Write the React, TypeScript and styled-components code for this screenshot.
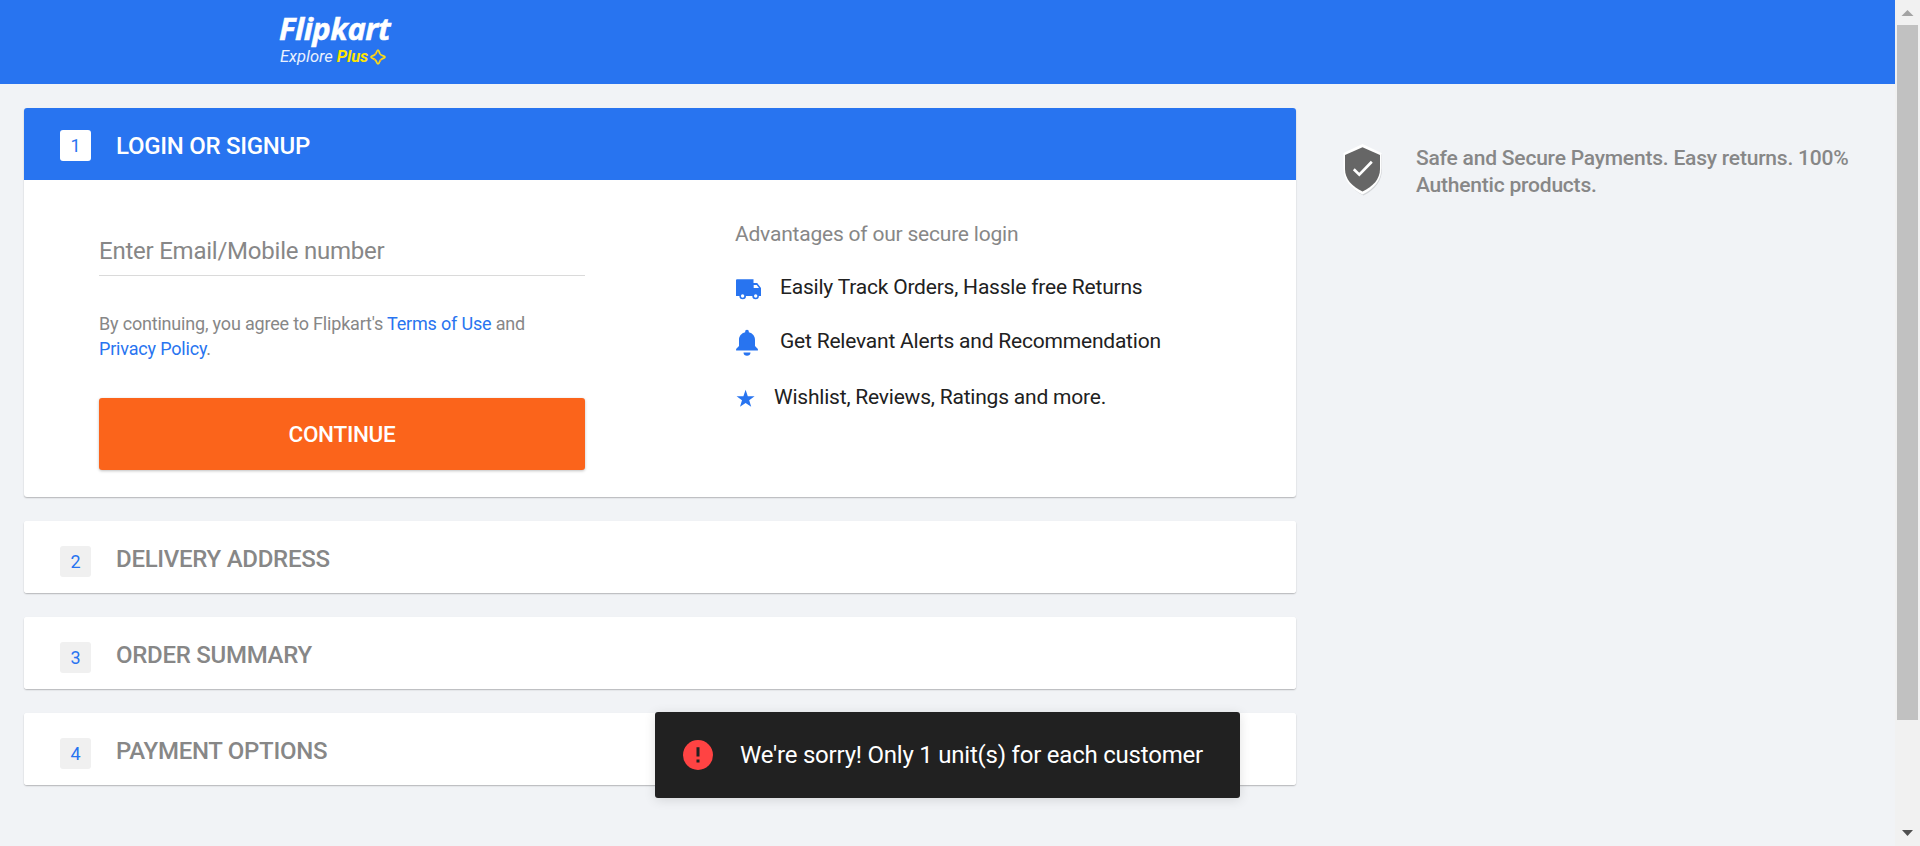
import React from "react";
import styled, { createGlobalStyle } from "styled-components";

const BLUE = "#2874f0";
const GREY = "#878787";

const GlobalStyle = createGlobalStyle`
  * { box-sizing: border-box; }
  html, body { margin: 0; height: 100%; overflow: hidden; }
  body { background: #f1f3f6; font-family: Roboto, "Liberation Sans", sans-serif; color: #212121; }
  h3, p, ul { margin: 0; padding: 0; font-weight: 400; }
`;

const Screen = styled.div`
  display: flex;
  width: 1920px;
  height: 846px;
  overflow: hidden;
`;

const Page = styled.div`
  position: relative;
  flex: 1;
  min-width: 0;
`;

const Header = styled.header`
  height: 84px;
  background: ${BLUE};
  padding: 10px 0 0 279px;
`;

const Logo = styled.div`
  height: 36px;
  font: italic 700 31px/36px "Open Sans", sans-serif;
  letter-spacing: -0.5px;
  -webkit-text-stroke: 0.5px #fff;
  color: #fff;
  white-space: nowrap;
`;

const Tagline = styled.div`
  display: flex;
  align-items: center;
  height: 21px;
  padding-left: 1px;
  font-size: 16.5px;
  line-height: 21px;
  font-style: italic;
  color: #e9f1fe;
  white-space: nowrap;
`;

const Plus = styled.b`
  margin: 0 2px 0 4px;
  font-weight: 700;
  letter-spacing: -0.1px;
  color: #ffe500;
`;

const Main = styled.main`
  display: flex;
  padding: 24px 24px 0;
`;

const Steps = styled.div`
  display: flex;
  flex-direction: column;
  gap: 24px;
  width: 1272px;
`;

const Card = styled.section`
  background: #fff;
  border-radius: 3px;
  box-shadow: 0 1px 1.5px 0 rgba(0, 0, 0, 0.26);
`;

const StepHeader = styled.div<{ $active?: boolean }>`
  display: flex;
  align-items: flex-start;
  height: 72px;
  padding: ${(p) => (p.$active ? "22px" : "25px")} 36px 0;
  border-radius: ${(p) => (p.$active ? "3px 3px 0 0" : "3px")};
  background: ${(p) => (p.$active ? BLUE : "#fff")};
`;

const StepNumber = styled.span<{ $active?: boolean }>`
  width: 31px;
  height: 31px;
  margin-right: 25px;
  border-radius: 3px;
  background: ${(p) => (p.$active ? "#fff" : "#f0f0f0")};
  color: ${BLUE};
  font-size: 18px;
  line-height: 31px;
  text-align: center;
`;

const StepTitle = styled.h3<{ $active?: boolean }>`
  margin-top: ${(p) => (p.$active ? "2px" : "-1px")};
  font-size: 24px;
  line-height: 28px;
  font-weight: 500;
  letter-spacing: -0.28px;
  color: ${(p) => (p.$active ? "#fff" : GREY)};
`;

const LoginBody = styled.div`
  display: flex;
  height: 317px;
  padding: 36px 75px 0;
`;

const Form = styled.div`
  width: 486px;
  margin-right: 150px;
`;

const Field = styled.div`
  height: 60px;
  padding-top: 21px;
  border-bottom: 1px solid #dadada;
  font-size: 24px;
  line-height: 28px;
  letter-spacing: -0.23px;
  color: ${GREY};
`;

const Terms = styled.p`
  margin-top: 35px;
  width: 450px;
  font-size: 18px;
  line-height: 25px;
  letter-spacing: -0.185px;
  color: ${GREY};
`;

const Link = styled.span`
  color: ${BLUE};
`;

const Continue = styled.button`
  display: block;
  width: 100%;
  height: 72px;
  margin-top: 37px;
  border: 0;
  border-radius: 3px;
  background: #fb641b;
  box-shadow: 0 1px 3px 0 rgba(0, 0, 0, 0.25);
  color: #fff;
  font: 500 22.5px Roboto, sans-serif;
  letter-spacing: -0.3px;
`;

const Advantages = styled.div`
  padding-top: 5px;
  letter-spacing: -0.21px;
`;

const AdvantagesTitle = styled.p`
  font-size: 21px;
  line-height: 26px;
  color: ${GREY};
`;

const Advantage = styled.div<{ $gap: number; $top: number }>`
  display: flex;
  align-items: flex-start;
  gap: ${(p) => p.$gap}px;
  margin-top: ${(p) => p.$top}px;
  height: 28px;
  font-size: 21px;
  line-height: 28px;
  white-space: nowrap;
`;

const Aside = styled.aside`
  display: flex;
  align-items: flex-start;
  padding: 34px 0 0 45px;
`;

const AsideText = styled.p`
  width: 446px;
  margin: 3px 0 0 30px;
  font-size: 21px;
  line-height: 27px;
  font-weight: 500;
  letter-spacing: -0.21px;
  color: ${GREY};
`;

const Toast = styled.div`
  position: absolute;
  left: 655px;
  top: 712px;
  display: flex;
  align-items: center;
  gap: 27px;
  width: 585px;
  height: 86px;
  padding-left: 28px;
  border-radius: 3px;
  background: #212121;
  box-shadow: 0 2px 12px 0 rgba(0, 0, 0, 0.12);
  color: #fff;
  font-size: 24px;
  line-height: 28px;
  letter-spacing: -0.22px;
  white-space: nowrap;
`;

const Scrollbar = styled.div`
  display: flex;
  flex-direction: column;
  align-items: center;
  width: 25px;
  background: #f1f1f1;
`;

const Thumb = styled.div`
  width: 21px;
  height: 695px;
  background: #c1c1c1;
`;

const ArrowBox = styled.svg`
  display: block;
  width: 25px;
  height: 25px;
`;

const Spacer = styled.div`
  flex: 1;
`;

const PlusStar = () => (
  <svg width="16" height="16" viewBox="0 0 16 16">
    <path
      d="M8 1.2C8.9 1.2 9.2 3 9.8 4.5C10.3 5.6 11.2 6.2 12.5 6.6C14 7.1 15 7.4 15 8.1C15 8.9 13.6 9.2 12.2 9.8C10.9 10.4 10.2 11.1 9.8 12.3C9.3 13.8 8.9 14.9 8 14.9C7.1 14.9 6.8 13.6 6.2 12.2C5.7 11 5 10.3 3.8 9.8C2.2 9.2 1 8.9 1 8C1 7.2 2.4 6.9 3.8 6.3C5 5.8 5.7 5.2 6.2 4C6.8 2.5 7.1 1.2 8 1.2Z"
      fill="none"
      stroke="#fddc16"
      strokeWidth="1.8"
    />
    <path d="M4.8 5.6L6.2 4.1M9.8 12.3L11 10.5M3.8 9.8L5.5 11" stroke="#f9a825" strokeWidth="1.4" />
  </svg>
);

const Truck = () => (
  <svg width="27" height="28" viewBox="0 0 27 28">
    <path
      fill={BLUE}
      d="M2 6.3H18.5V10H22.2L26 15V23H23.9A3.3 3.3 0 0 1 17.3 23H11A3.3 3.3 0 0 1 4.4 23H1V7.3Q1 6.3 2 6.3Z"
    />
    <path fill="#fff" d="M18.7 12H21.7L24 15H18.7Z" />
    <circle cx="7.6" cy="23" r="1.7" fill="#fff" />
    <circle cx="20.7" cy="23" r="1.7" fill="#fff" />
  </svg>
);

const Bell = () => (
  <svg width="24" height="30" viewBox="0 0 24 30">
    <path
      fill={BLUE}
      d="M12 2.8C13.2 2.8 13.8 3.6 13.8 4.6V5.3C17.8 6.3 20 9.3 20 13V19L22.9 21.9V23.4H1.1V21.9L4 19V13C4 9.3 6.2 6.3 10.2 5.3V4.6C10.2 3.6 10.8 2.8 12 2.8ZM8.5 25.4H15.5C15.5 27.6 14 28.7 12 28.7S8.5 27.6 8.5 25.4Z"
    />
  </svg>
);

const Star = () => (
  <svg width="20" height="28" viewBox="0 0 20 28">
    <path
      fill={BLUE}
      d="M10.6 6.8L12.8 13.3H19.6L14.2 17.3L16.2 23.8L10.6 19.9L5 23.8L7 17.3L1.6 13.3H8.4Z"
    />
  </svg>
);

const Shield = () => (
  <svg width="45" height="56" viewBox="0 0 45 56">
    <path
      d="M22 3.5L41 12.5V27C41 39 34 47.5 22.5 53.5C11 48 4 39 4 27V12.5Z"
      fill="#d3d5d8"
    />
    <path d="M21.5 2L40.5 11V26C40.5 38 33 47 21.5 52.5C10 47 2.5 38 2.5 26V11Z" fill="#fff" />
    <path d="M21.5 5.2L39 13V27C39 37 32 44.5 21.5 49.5C11 44.5 4 37 4 27V13Z" fill="#666" />
    <path d="M12.8 27.3L18.3 32.7L30.8 19.7" fill="none" stroke="#fff" strokeWidth="2.7" />
  </svg>
);

const ErrorIcon = () => (
  <svg width="30" height="30" viewBox="0 0 30 30">
    <circle cx="15" cy="15" r="15" fill="#ff4343" />
    <path d="M13.5 7.2H16.5V16.5H13.5ZM13.5 19.5H16.5V22.5H13.5Z" fill="#212121" />
  </svg>
);

const steps = [
  { n: 2, title: "DELIVERY ADDRESS" },
  { n: 3, title: "ORDER SUMMARY" },
  { n: 4, title: "PAYMENT OPTIONS" },
];

export default function App() {
  return (
    <Screen>
      <GlobalStyle />
      <Page>
        <Header>
          <Logo>Flipkart</Logo>
          <Tagline>
            Explore<Plus>Plus</Plus>
            <PlusStar />
          </Tagline>
        </Header>
        <Main>
          <Steps>
            <Card>
              <StepHeader $active>
                <StepNumber $active>1</StepNumber>
                <StepTitle $active>LOGIN OR SIGNUP</StepTitle>
              </StepHeader>
              <LoginBody>
                <Form>
                  <Field>Enter Email/Mobile number</Field>
                  <Terms>
                    By continuing, you agree to Flipkart's <Link>Terms of Use</Link> and{" "}
                    <Link>Privacy Policy</Link>.
                  </Terms>
                  <Continue>CONTINUE</Continue>
                </Form>
                <Advantages>
                  <AdvantagesTitle>Advantages of our secure login</AdvantagesTitle>
                  <Advantage $gap={18} $top={26}>
                    <Truck />
                    Easily Track Orders, Hassle free Returns
                  </Advantage>
                  <Advantage $gap={21} $top={26}>
                    <Bell />
                    Get Relevant Alerts and Recommendation
                  </Advantage>
                  <Advantage $gap={19} $top={28}>
                    <Star />
                    Wishlist, Reviews, Ratings and more.
                  </Advantage>
                </Advantages>
              </LoginBody>
            </Card>
            {steps.map((s) => (
              <Card key={s.n}>
                <StepHeader>
                  <StepNumber>{s.n}</StepNumber>
                  <StepTitle>{s.title}</StepTitle>
                </StepHeader>
              </Card>
            ))}
          </Steps>
          <Aside>
            <Shield />
            <AsideText>Safe and Secure Payments. Easy returns. 100% Authentic products.</AsideText>
          </Aside>
        </Main>
        <Toast>
          <ErrorIcon />
          We're sorry! Only 1 unit(s) for each customer
        </Toast>
      </Page>
      <Scrollbar>
        <ArrowBox viewBox="0 0 25 25">
          <path d="M12.5 10L18.5 16H6.5Z" fill="#a3a3a3" />
        </ArrowBox>
        <Thumb />
        <Spacer />
        <ArrowBox viewBox="0 0 25 25">
          <path d="M7 9H18L12.5 15Z" fill="#505050" />
        </ArrowBox>
      </Scrollbar>
    </Screen>
  );
}
